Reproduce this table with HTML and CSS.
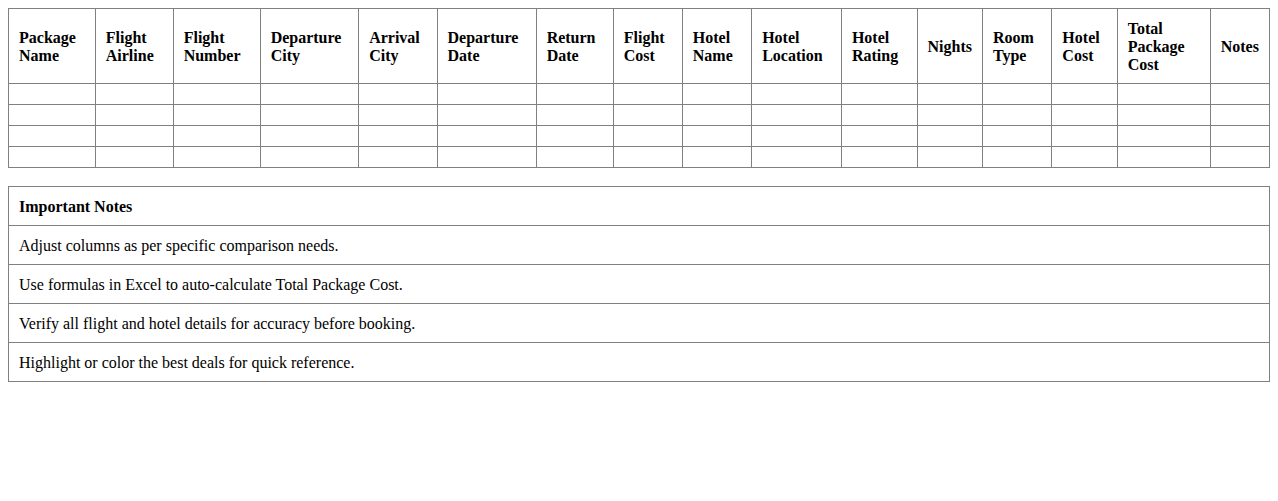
FILE: index.html
```html
<!DOCTYPE html>
<html>
<head>
<meta charset="utf-8">
<link rel="stylesheet" href="styles.css">
</head>
<body>
<table class="grid">
  <thead>
    <tr>
      <th>Package Name</th>
      <th>Flight Airline</th>
      <th>Flight Number</th>
      <th>Departure City</th>
      <th>Arrival City</th>
      <th>Departure Date</th>
      <th>Return Date</th>
      <th>Flight Cost</th>
      <th>Hotel Name</th>
      <th>Hotel Location</th>
      <th>Hotel Rating</th>
      <th>Nights</th>
      <th>Room Type</th>
      <th>Hotel Cost</th>
      <th>Total Package Cost</th>
      <th>Notes</th>
    </tr>
  </thead>
  <tbody>
    <tr><td></td><td></td><td></td><td></td><td></td><td></td><td></td><td></td><td></td><td></td><td></td><td></td><td></td><td></td><td></td><td></td></tr>
    <tr><td></td><td></td><td></td><td></td><td></td><td></td><td></td><td></td><td></td><td></td><td></td><td></td><td></td><td></td><td></td><td></td></tr>
    <tr><td></td><td></td><td></td><td></td><td></td><td></td><td></td><td></td><td></td><td></td><td></td><td></td><td></td><td></td><td></td><td></td></tr>
    <tr><td></td><td></td><td></td><td></td><td></td><td></td><td></td><td></td><td></td><td></td><td></td><td></td><td></td><td></td><td></td><td></td></tr>
  </tbody>
</table>

<table class="grid notes">
  <thead>
    <tr><th>Important Notes</th></tr>
  </thead>
  <tbody>
    <tr><td>Adjust columns as per specific comparison needs.</td></tr>
    <tr><td>Use formulas in Excel to auto-calculate Total Package Cost.</td></tr>
    <tr><td>Verify all flight and hotel details for accuracy before booking.</td></tr>
    <tr><td>Highlight or color the best deals for quick reference.</td></tr>
  </tbody>
</table>
</body>
</html>
```
FILE: styles.css
```css
body {
  margin: 8px;
  font-family: "Liberation Serif", "Times New Roman", serif;
  font-size: 16px;
  color: #000;
  background: #fff;
}
.grid {
  width: 100%;
  border-collapse: collapse;
  margin-bottom: 18px;
}
.grid th,
.grid td {
  border: 1px solid #808080;
  padding: 11px 10px 9px;
  text-align: left;
  line-height: 18px;
}
.grid th {
  font-weight: bold;
}
.notes th,
.notes td {
  text-align: left;
}
```
